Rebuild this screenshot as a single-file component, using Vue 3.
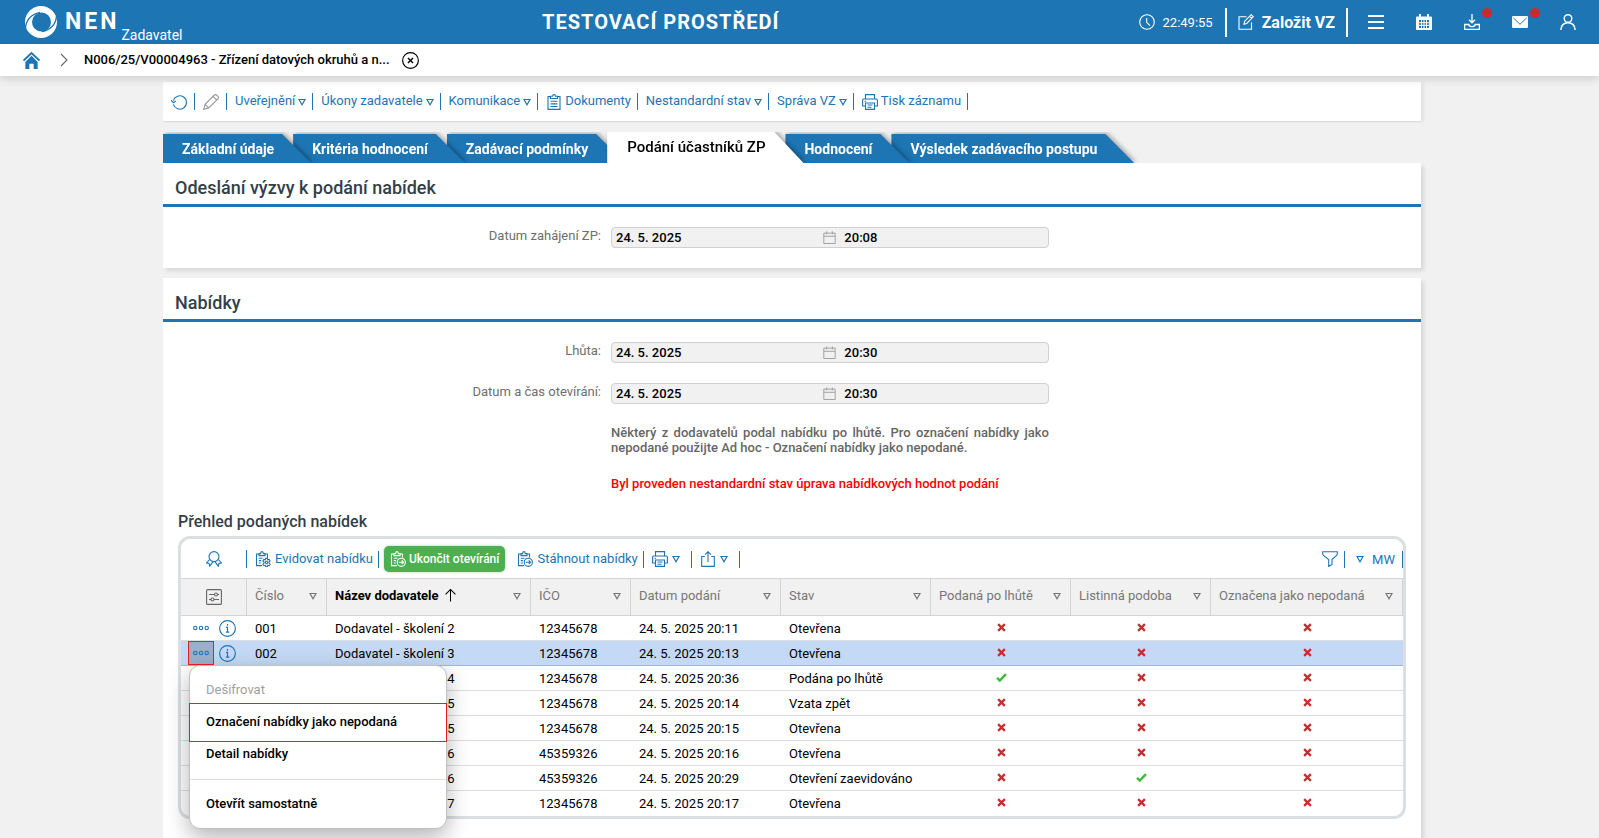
<script setup>
import { h, ref } from 'vue'

const shapes = {
  clock: '<circle cx="8" cy="8" r="7.3"/><path d="M7.700 4v4.300l3.200 3.400"/>',
  edit: '<path d="M8.500 2.700H1v12.600h12.500V8.500"/><path d="M6 10.200l.6-2.900 6.600-6.600 2.100 2.100-6.600 6.700zM11.600 2.400l2.100 2"/>',
  menu: '<path stroke-width="2" d="M0 2h16M0 8h16M0 14h16"/>',
  calendar: '<path fill="currentColor" stroke="none" fill-rule="evenodd" d="M1 2.500h2V0h2v2.500h6V0h2v2.500h2a1 1 0 0 1 1 1V15a1 1 0 0 1-1 1H1a1 1 0 0 1-1-1V3.500a1 1 0 0 1 1-1zM3 6v8h10V6z"/><path stroke-width="1" d="M5.500 6v8M8 6v8M10.500 6v8M3 8.700h10M3 11.300h10"/>',
  inbox: '<path stroke-width="1.300" d="M8 0v8.500M5 5.800l3 3 3-3"/><path stroke-width="1.300" d="M.6 10.500h4.200c.4 1.500 1.600 2.200 3.200 2.200s2.800-.7 3.200-2.200h4.200v4.900H.6z"/>',
  mail: '<path fill="currentColor" stroke="none" d="M0 3.200Q0 2 1.200 2h13.600Q16 2 16 3.200v9.600q0 1.200-1.200 1.200H1.200Q0 14 0 12.800z"/><path stroke="#1d75b4" stroke-width="1" d="M1.500 4L8 10.300 14.500 4"/>',
  user: '<g stroke-width="1.400"><circle cx="8" cy="4.500" r="3.800"/><path d="M.8 16c.3-4.800 3-7.300 7.200-7.300s6.900 2.500 7.200 7.300"/></g>',
  home: '<path fill="currentColor" stroke="none" d="M8 3.600l5.800 5.700V16H10v-5H6v5H2.200V9.300z"/><path stroke-width="1.800" d="M.5 8L8 1l7.500 7"/>',
  chevron: '<path d="M5 2l6 6-6 6"/>',
  close: '<circle cx="8" cy="8" r="7.400"/><path stroke-width="1.300" d="M5.600 5.600l4.800 4.800M10.400 5.600l-4.800 4.800"/>',
  refresh: '<path d="M2.300 6.600A6.700 6.700 0 1 1 2.300 10.400M0 6.200l2.200 2.500L5 7"/>',
  pencil: '<path d="M.7 15.300l1.400-5L11.300 1q1.300-1 2.600.3l.9.900q1.200 1.300.1 2.600l-9.200 9.100zM10 2.400l3.700 3.700M2.100 10.300l3.600 3.600"/>',
  clipboard: '<path d="M4.500 2.600H2v12.800h12V2.600h-2.500M4.500 4.500V2.300h2Q6.600.6 8 .6t1.500 1.700h2v2.200zM4.500 7.300h7M4.500 9.900h7M4.500 12.500h7"/>',
  printer: '<path d="M3.500 5V.6h9V5M3.500 12H.6V6q0-1 1-1h12.800q1 0 1 1v6h-2.900M3.500 9h9v6.400h-9zM5.500 11h5M5.500 13.200h4M2.500 7.200h1.500"/>',
  date: '<path stroke-width="1.100" d="M1 2.600h14v12.800H1zM1 6.500h14M4.500.5v3.600M11.500.5v3.600"/>',
  rosette: '<circle cx="8" cy="5.600" r="5"/><path d="M3.600 8.500L.6 12l2.500.5.6 2.700 3.200-4.300M12.400 8.500l3 3.500-2.500.5-.6 2.700-3.200-4.300"/>',
  clipGear: '<path d="M7 14.600H1.500V3H4M10 3h2.500v4M4 4.600V2.600h1.700Q5.700.6 7 .6t1.300 2H10v2zM3.800 7.200h3.700M3.800 9.600h2.500M3.800 12h2"/><circle cx="11.500" cy="11.500" r="1.200"/><path d="M10.700 7.400h1.600l.4 1.400 1.500-.4.900 1.500-1.100 1.100v1l1.100 1.200-.9 1.500-1.500-.4-.4 1.400h-1.600l-.4-1.400-1.500.4-.9-1.500L9 12v-1L7.900 9.900l.9-1.500 1.500.4z"/>',
  clipArrow: '<path d="M7 14.600H1.500V3H4M10 3h2.500v3.500M4 4.600V2.600h1.700Q5.700.6 7 .6t1.300 2H10v2zM3.800 7.200h3.700M3.800 9.600h2.200M3.800 12h2"/><circle cx="11.300" cy="11.300" r="4.100"/><path d="M8.800 11.300h4.600M11.700 9.400l1.900 1.900-1.900 1.900"/>',
  share: '<path d="M4.800 5.500H1.700v9.900h12.600V5.500h-3.100M8 11V.8M5 3.700l3-3 3 3"/>',
  funnel: '<path d="M.7.700h14.600v2.100q0 1-1 1.800L10 8.500v5l-3.300 2V8.500L1.700 4.600q-1-.8-1-1.800z"/>',
  sliders: '<rect x=".6" y=".6" width="14.800" height="14.800" rx="1"/><path d="M3 5.500h5.500M11.500 5.500H13M3 10.500h2M8 10.500h5"/><circle cx="10" cy="5.500" r="1.500"/><circle cx="6.500" cy="10.500" r="1.500"/>',
  dots: '<circle cx="2.300" cy="8" r="1.700"/><circle cx="8" cy="8" r="1.700"/><circle cx="13.700" cy="8" r="1.700"/>',
  info: '<circle cx="8" cy="8" r="7.400"/><path d="M8 3.700v1.600M6.600 7H8v4M6.500 11.400h3.200"/>',
  up: '<path d="M8 14.500V1.500M2.700 6.800L8 1.500l5.300 5.300"/>',
  tri: '<path stroke-width="2.400" d="M2 3h12L8 13.500z"/>',
  no: '<path stroke-width="4" d="M2 2l12 12M14 2L2 14"/>',
  yes: '<path stroke-width="3.600" d="M1.500 8.500l4 4L14.500 3"/>'
}

const Icon = ({ name, size = 16 }) =>
  h('svg', {
    width: size,
    height: size,
    viewBox: '0 0 16 16',
    fill: 'none',
    stroke: 'currentColor',
    'stroke-width': 1.1,
    'aria-hidden': 'true',
    innerHTML: shapes[name]
  })
Icon.props = ['name', 'size']

const topIcons = [
  { icon: 'menu', label: 'Menu' },
  { icon: 'calendar', label: 'Kalendář' },
  { icon: 'inbox', label: 'Stažené soubory', alert: true },
  { icon: 'mail', label: 'Zprávy', alert: true },
  { icon: 'user', label: 'Uživatel' }
]

const actions = [
  { icon: 'refresh', label: 'Obnovit' },
  { icon: 'pencil', label: 'Upravit', muted: true },
  { text: 'Uveřejnění', menu: true },
  { text: 'Úkony zadavatele', menu: true },
  { text: 'Komunikace', menu: true },
  { icon: 'clipboard', text: 'Dokumenty' },
  { text: 'Nestandardní stav', menu: true },
  { text: 'Správa VZ', menu: true },
  { icon: 'printer', text: 'Tisk záznamu' }
]

const tabs = ['Základní údaje', 'Kritéria hodnocení', 'Zadávací podmínky', 'Podání účastníků ZP', 'Hodnocení', 'Výsledek zadávacího postupu']
const activeTab = ref(3)

const columns = [
  { key: 'no', label: 'Číslo' },
  { key: 'name', label: 'Název dodavatele', sorted: true },
  { key: 'ico', label: 'IČO' },
  { key: 'date', label: 'Datum podání' },
  { key: 'state', label: 'Stav' },
  { key: 'late', label: 'Podaná po lhůtě' },
  { key: 'paper', label: 'Listinná podoba' },
  { key: 'void', label: 'Označena jako nepodaná' }
]

const rows = [
  ['001', 2, '12345678', '20:11', 'Otevřena'],
  ['002', 3, '12345678', '20:13', 'Otevřena'],
  ['003', 4, '12345678', '20:36', 'Podána po lhůtě', true],
  ['004', 5, '12345678', '20:14', 'Vzata zpět'],
  ['005', 5, '12345678', '20:15', 'Otevřena'],
  ['006', 6, '45359326', '20:16', 'Otevřena'],
  ['007', 6, '45359326', '20:29', 'Otevření zaevidováno', false, true],
  ['008', 7, '12345678', '20:17', 'Otevřena']
].map(([no, n, ico, time, state, late = false, paper = false]) => ({
  no, name: `Dodavatel - školení ${n}`, ico, date: `24. 5. 2025 ${time}`, state, flags: [late, paper, false]
}))
const openRow = ref(1)
</script>

<template>
  <div class="page">
    <header class="top">
      <a href="#" class="brand">
        <svg width="32" height="32" viewBox="0 0 32 32" fill="#fff" aria-hidden="true">
          <path fill-rule="evenodd" d="M16 0a16 16 0 1 1 0 32 16 16 0 0 1 0-32zm.5 6.500a9.500 9.500 0 1 0 0 19 9.500 9.500 0 0 0 0-19z" />
          <path d="M.5 22Q1.500 9.500 15 6.300M31.500 10Q30.500 22.500 17 25.700" fill="none" stroke="#1d75b4" stroke-width="1.300" />
        </svg>
        <strong>NEN</strong><span>Zadavatel</span>
      </a>
      <div class="env">TESTOVACÍ PROSTŘEDÍ</div>
      <div class="tools">
        <span class="time"><Icon name="clock" /> 22:49:55</span>
        <button class="create"><Icon name="edit" /> Založit VZ</button>
        <button v-for="t in topIcons" :key="t.icon" class="tool" :aria-label="t.label">
          <Icon :name="t.icon" /><i v-if="t.alert" class="alert"></i>
        </button>
      </div>
    </header>

    <nav class="crumbs">
      <a href="#" class="home" aria-label="Domů"><Icon name="home" size="17" /></a>
      <Icon name="chevron" class="chev" />
      <a href="#" class="current">N006/25/V00004963 - Zřízení datových okruhů a n...</a>
      <button class="close" aria-label="Zavřít"><Icon name="close" size="17" /></button>
    </nav>

    <main>
      <div class="actions">
        <button v-for="(a, i) in actions" :key="i" :class="['action', { muted: a.muted, bare: !a.text }]" :aria-label="a.text || a.label">
          <Icon v-if="a.icon" :name="a.icon" />
          <span v-if="a.text">{{ a.text }}</span>
          <Icon v-if="a.menu" name="tri" size="8" />
        </button>
      </div>

      <div class="tabs">
        <button
          v-for="(t, i) in tabs" :key="t"
          :class="['tab', { active: i === activeTab }]"
          :style="{ zIndex: i === activeTab ? tabs.length + 1 : tabs.length - i }"
          @click="activeTab = i"
        >{{ t }}</button>
      </div>

      <section class="panel">
        <h2>Odeslání výzvy k podání nabídek</h2>
        <div class="form">
          <label for="start">Datum zahájení ZP:</label>
          <div class="field">
            <input id="start" value="24. 5. 2025" readonly />
            <Icon name="date" size="13" />
            <input value="20:08" aria-label="Čas zahájení ZP" readonly />
          </div>
        </div>
      </section>

      <section class="panel grow">
        <h2>Nabídky</h2>
        <div class="form">
          <label for="limit">Lhůta:</label>
          <div class="field">
            <input id="limit" value="24. 5. 2025" readonly />
            <Icon name="date" size="13" />
            <input value="20:30" aria-label="Čas lhůty" readonly />
          </div>
          <label for="opening">Datum a čas otevírání:</label>
          <div class="field">
            <input id="opening" value="24. 5. 2025" readonly />
            <Icon name="date" size="13" />
            <input value="20:30" aria-label="Čas otevírání" readonly />
          </div>
          <p class="note">Některý z dodavatelů podal nabídku po lhůtě. Pro označení nabídky jako nepodané použijte Ad hoc - Označení nabídky jako nepodané.</p>
          <p class="note warn">Byl proveden nestandardní stav úprava nabídkových hodnot podání</p>
        </div>

        <h3>Přehled podaných nabídek</h3>
        <div class="grid">
          <div class="gridbar">
            <button class="badge" aria-label="Certifikát"><Icon name="rosette" /></button>
            <button class="action wide"><Icon name="clipGear" /><span>Evidovat nabídku</span></button>
            <button class="finish"><Icon name="clipArrow" /><span>Ukončit otevírání</span></button>
            <button class="action wide"><Icon name="clipArrow" /><span>Stáhnout nabídky</span></button>
            <button class="action roomy" aria-label="Tisk"><Icon name="printer" /><Icon name="tri" size="8" /></button>
            <button class="action roomy" aria-label="Export"><Icon name="share" /><Icon name="tri" size="8" /></button>
            <span class="space"></span>
            <button class="action" aria-label="Filtr"><Icon name="funnel" /></button>
            <button class="action view"><Icon name="tri" size="8" /><span>MW</span></button>
          </div>
          <table>
            <colgroup>
              <col class="c-act" /><col class="c-no" /><col /><col class="c-ico" /><col class="c-date" />
              <col class="c-date" /><col class="c-flag" /><col class="c-flag" /><col class="c-void" />
            </colgroup>
            <thead>
              <tr>
                <th class="setup"><button aria-label="Nastavení sloupců"><Icon name="sliders" /></button></th>
                <th v-for="c in columns" :key="c.key" :class="{ sorted: c.sorted }">
                  <div class="head">
                    <span>{{ c.label }}</span>
                    <Icon v-if="c.sorted" name="up" size="15" />
                    <Icon name="tri" size="8" class="menu" />
                  </div>
                </th>
              </tr>
            </thead>
            <tbody>
              <tr v-for="(r, i) in rows" :key="r.no" :class="{ selected: i === openRow }">
                <td class="rowact">
                  <div class="pair">
                    <button class="more" aria-label="Akce"><Icon name="dots" /></button>
                    <button aria-label="Detail"><Icon name="info" size="17" /></button>
                    <div v-if="i === openRow" class="popup">
                      <button disabled>Dešifrovat</button>
                      <button class="marked">Označení nabídky jako nepodaná</button>
                      <button>Detail nabídky</button>
                      <hr />
                      <button>Otevřít samostatně</button>
                    </div>
                  </div>
                </td>
                <td>{{ r.no }}</td>
                <td>{{ r.name }}</td>
                <td>{{ r.ico }}</td>
                <td>{{ r.date }}</td>
                <td>{{ r.state }}</td>
                <td v-for="(f, k) in r.flags" :key="k" :class="['flag', f ? 'yes' : 'no']">
                  <Icon :name="f ? 'yes' : 'no'" :size="f ? 11 : 9" />
                </td>
              </tr>
            </tbody>
          </table>
        </div>
      </section>
    </main>
  </div>
</template>

<style>
body {
  margin: 0;
  background: #f1f1f1;
}
</style>

<style scoped>
.page,
.page * {
  box-sizing: border-box;
}
.page {
  display: flex;
  flex-direction: column;
  min-height: 100vh;
  font: 13px/15px Roboto, "Liberation Sans", sans-serif;
  color: #000;
}
button,
input {
  margin: 0;
  padding: 0;
  border: 0;
  background: none;
  font: inherit;
  color: inherit;
}
button {
  cursor: pointer;
}
a {
  color: inherit;
  text-decoration: none;
}
svg {
  display: block;
  flex: none;
}

.top {
  display: grid;
  grid-template-columns: 33% auto 1fr;
  align-items: center;
  height: 44px;
  padding: 0 7px 0 25px;
  background: #1d75b4;
  color: #fff;
}
.brand {
  display: flex;
  align-items: center;
}
.brand strong {
  margin-left: 8px;
  font-size: 23px;
  line-height: 44px;
  letter-spacing: 3px;
}
.brand span {
  align-self: flex-end;
  margin-left: 2px;
  font-size: 14px;
  line-height: 18px;
}
.env {
  font-size: 20px;
  font-weight: 700;
  letter-spacing: 1px;
  line-height: 44px;
  white-space: nowrap;
}
.tools {
  display: flex;
  align-items: center;
  justify-content: flex-end;
}
.time {
  display: flex;
  align-items: center;
  gap: 8px;
  padding-right: 12px;
}
.create {
  display: flex;
  align-items: center;
  gap: 8px;
  height: 29px;
  margin-right: 4px;
  padding: 0 11px;
  border: solid #fff;
  border-width: 0 2px;
  font-size: 16px;
  font-weight: 700;
}
.tool {
  position: relative;
  display: grid;
  place-items: center;
  width: 48px;
  height: 44px;
}
.alert {
  position: absolute;
  top: 8px;
  right: 4px;
  width: 10px;
  height: 10px;
  border-radius: 50%;
  background: #c92c2f;
}

.crumbs {
  position: relative;
  z-index: 3;
  display: flex;
  align-items: center;
  height: 32px;
  padding-left: 23px;
  background: #fff;
  box-shadow: 0 3px 8px rgba(0, 0, 0, 0.14);
}
.home {
  color: #1d75b4;
}
.chev {
  margin: 0 12px 0 16px;
  color: #666;
}
.current {
  padding-bottom: 2px;
  font-weight: 500;
}
.close {
  margin-left: 12px;
}

main {
  display: flex;
  flex: 1;
  flex-direction: column;
  padding: 6px 178px 0 163px;
}
.actions {
  display: flex;
  align-items: center;
  height: 40px;
  background: #fff;
  border-bottom: 1px solid #dcdcdc;
  box-shadow: 3px 0 3px rgba(0, 0, 0, 0.06);
}
.action {
  display: flex;
  align-items: center;
  gap: 3px;
  height: 17px;
  padding: 0 6px 0 8px;
  border-right: 1px solid #1d75b4;
  color: #1d75b4;
}
.action.bare {
  padding-right: 7px;
}
.action.muted svg {
  color: #999;
}
.action:not(.view) span {
  padding-bottom: 2px;
}

.tabs {
  display: flex;
  align-items: flex-end;
  height: 31px;
  margin-top: 10px;
  overflow: hidden;
  isolation: isolate;
}
.tab {
  position: relative;
  height: 29px;
  padding: 2px 19px 0;
  font-size: 14px;
  font-weight: 700;
  white-space: nowrap;
  color: #fff;
  filter: drop-shadow(2px -1px 2px rgba(0, 0, 0, 0.3));
}
.tab::before {
  content: "";
  position: absolute;
  z-index: -1;
  inset: 0 -18px 0 0;
  background: #1d75b4;
  clip-path: polygon(0 0, calc(100% - 29px) 0, 100% 100%, 0 100%);
}
.tab.active {
  height: 31px;
  padding: 0 20px;
  font-size: 15px;
  font-weight: 500;
  color: #000;
}
.tab.active::before {
  background: #fff;
}

.panel {
  position: relative;
  z-index: 1;
  background: #fff;
  box-shadow: 3px 3px 4px rgba(0, 0, 0, 0.1);
}
.grow {
  flex: 1;
  margin-top: 10px;
}
h2 {
  margin: 0;
  padding: 15px 12px 6px;
  border-bottom: 3px solid #1d75b4;
  font-size: 18px;
  font-weight: 500;
  line-height: 20px;
  color: #333f48;
}
.form {
  display: grid;
  grid-template-columns: 438fr 438fr 362fr;
  gap: 20px 10px;
  padding: 20px 0;
}
label {
  grid-column: 1;
  text-align: right;
  line-height: 17px;
  color: #6e6e6e;
}
.field {
  display: grid;
  grid-template-columns: 48% 13px 1fr;
  align-items: center;
  height: 21px;
  padding-left: 4px;
  border: 1px solid #d0d0d0;
  border-radius: 4px;
  background: #f1f1f1;
  color: #999;
}
.field input {
  min-width: 0;
  font-weight: 500;
  line-height: 19px;
  color: #000;
}
.field svg + input {
  padding-left: 8px;
}
.note {
  grid-column: 2;
  margin: 1px 0 0;
  font-weight: 500;
  text-align: justify;
  color: #666;
}
.warn {
  white-space: nowrap;
  color: #f00;
}
h3 {
  margin: 1px 15px 4px;
  font-size: 16px;
  font-weight: 500;
  line-height: 20px;
  color: #333f48;
}

.grid {
  margin: 0 15px;
  border: 3px solid #dcdfe1;
  border-radius: 12px;
}
.gridbar {
  display: flex;
  align-items: center;
  height: 39px;
  padding-top: 1px;
  color: #1d75b4;
}
.badge {
  display: grid;
  place-items: center;
  width: 66px;
  height: 18px;
  border-right: 1px solid #1d75b4;
}
.space {
  flex: 1;
}
.finish {
  display: flex;
  align-items: center;
  gap: 3px;
  height: 26px;
  margin: 0 4px 0 5px;
  padding: 0 6px;
  border-radius: 5px;
  background: #4caf50;
  box-shadow: 0 0 3px rgba(76, 175, 80, 0.5);
  font-size: 12px;
  font-weight: 500;
  color: #fff;
}
.wide {
  gap: 4px;
  padding-right: 5px;
}
.roomy {
  gap: 4px;
  padding-right: 11px;
}
.view {
  gap: 8px;
  padding: 0 7px 0 11px;
}

table {
  width: 100%;
  table-layout: fixed;
  border-collapse: separate;
  border-spacing: 0;
}
.c-act { width: 66px; }
.c-no { width: 80px; }
.c-ico { width: 100px; }
.c-date { width: 150px; }
.c-flag { width: 140px; }
.c-void { width: 192px; }
th {
  height: 38px;
  padding: 0 9px 3px 8px;
  border: solid #d4d4d4;
  border-width: 1px 1px 1px 0;
  background: #f1f1f1;
  font-weight: 400;
  text-align: left;
  color: #777;
}
th.setup {
  padding: 0;
}
.setup button {
  display: block;
  margin: auto;
  color: #666;
}
.head {
  display: flex;
  align-items: center;
  gap: 4px;
  white-space: nowrap;
}
.head .menu {
  margin-left: auto;
}
.sorted span {
  font-weight: 700;
  color: #000;
}
.sorted svg:not(.menu) {
  color: #000;
}
td {
  height: 25px;
  padding: 1px 0 0 8px;
  border-bottom: 1px solid #dcdfe1;
  white-space: nowrap;
}
tbody tr:last-child td {
  border-bottom-color: transparent;
}
.selected td {
  border-bottom-color: #94bbeb;
  background: #c4d9f5;
}
td.flag {
  padding: 0 0 1px;
}
.flag svg {
  margin: auto;
}
.no {
  color: #c92c2f;
}
.yes {
  color: #3dbb3d;
}
td.rowact {
  padding: 0;
}
.pair {
  position: relative;
  display: flex;
  align-items: center;
  gap: 5px;
  padding-left: 7px;
  color: #1d75b4;
}
.more {
  display: grid;
  place-items: center;
  width: 26px;
  height: 24px;
}
.selected .more {
  background: #9aafca;
  outline: 1px solid #ed1c24;
  outline-offset: -1px;
}
.popup {
  position: absolute;
  z-index: 5;
  top: 100%;
  left: 8px;
  display: flex;
  flex-direction: column;
  width: 258px;
  padding: 7px 0 9px;
  border: 1px solid #c0c0c0;
  border-radius: 11px;
  background: #fff;
  box-shadow: 0 8px 22px rgba(0, 0, 0, 0.3);
  color: #000;
}
.popup button {
  position: relative;
  height: 32px;
  padding: 0 16px;
  font-weight: 500;
  text-align: left;
}
.popup button:disabled {
  font-weight: 400;
  color: #a0a0a0;
}
.marked::after {
  content: "";
  position: absolute;
  inset: -2px -1px -5px;
  border: 1px solid #ed1c24;
}
hr {
  width: 100%;
  margin: 10px 0 7px;
  border: 0;
  border-top: 1px solid #dcdfe1;
}
</style>
